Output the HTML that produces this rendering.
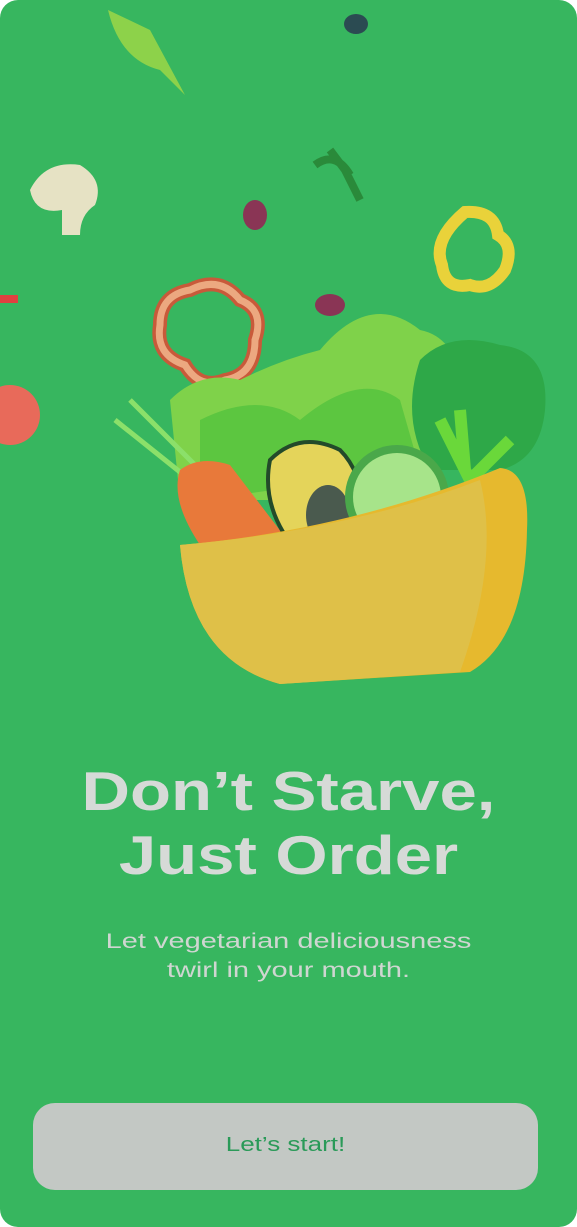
<!DOCTYPE html>
<html><head><meta charset="utf-8"><style>
html,body{margin:0;padding:0;background:#fff}
.ph{position:relative;width:577px;height:1227px;background:#37b65f;border-radius:18px;overflow:hidden;font-family:"Liberation Sans",sans-serif}
svg{position:absolute;left:0;top:0}
.t{position:absolute;left:0;width:577px;text-align:center;color:#d6dad7;font-weight:bold;font-size:55px;line-height:64px;top:759px;transform:scaleX(1.22);transform-origin:center}
.s{position:absolute;left:0;width:577px;text-align:center;color:#cfd6d1;font-size:21px;line-height:29px;top:927px;transform:scaleX(1.38);transform-origin:center}
.b{position:absolute;left:33px;top:1103px;width:505px;height:87px;background:#c3c8c4;border-radius:22px;}
.b span{position:absolute;left:0;width:505px;text-align:center;color:#2a9a58;font-size:20px;line-height:84px;transform:scaleX(1.3)}
</style></head><body><div class="ph">
<svg width="577" height="1227" viewBox="0 0 577 1227">
<path d="M108 10 L150 30 L185 95 L160 70 Q120 60 108 10Z" fill="#8dd24a"/>
<ellipse cx="356" cy="24" rx="12" ry="10" fill="#2b4b52"/>
<path d="M30 190 Q45 160 80 165 Q105 180 95 205 Q80 215 80 235 L62 235 L62 210 Q35 215 30 190Z" fill="#e6e2c4"/>
<path d="M330 150 L345 170 L360 200 M315 165 Q335 150 350 175" stroke="#2a8a3a" stroke-width="8" fill="none"/>
<ellipse cx="255" cy="215" rx="12" ry="15" fill="#8a3555"/>
<ellipse cx="330" cy="305" rx="15" ry="11" fill="#8a3555"/>
<path d="M465 212 Q495 210 498 235 Q515 245 505 270 Q490 292 470 285 Q445 290 442 265 Q432 240 465 212Z" fill="none" stroke="#e9d23a" stroke-width="12"/>
<path d="M190 290 Q220 275 240 300 Q265 310 255 340 Q255 375 225 380 Q200 390 185 365 Q155 355 160 325 Q160 295 190 290Z" fill="none" stroke="#c85a3a" stroke-width="14"/>
<path d="M190 290 Q220 275 240 300 Q265 310 255 340 Q255 375 225 380 Q200 390 185 365 Q155 355 160 325 Q160 295 190 290Z" fill="none" stroke="#eca880" stroke-width="7"/>
<circle cx="10" cy="415" r="30" fill="#e86a5a"/>
<rect x="0" y="295" width="18" height="8" fill="#e04040"/>
<path d="M170 400 Q200 370 240 380 Q280 360 320 350 Q370 290 420 330 Q470 340 460 430 L420 500 L180 500 Z" fill="#7fd24a"/>
<path d="M200 420 Q260 390 300 420 Q360 370 400 400 L420 470 L200 500Z" fill="#5cc640"/>
<path d="M420 360 Q450 330 500 345 Q550 350 545 410 Q540 460 500 470 L430 470 Q400 420 420 360Z" fill="#2ea848"/>
<path d="M440 420 L470 480 L510 440 M465 470 L460 410" stroke="#6ad83a" stroke-width="12" fill="none"/>
<path d="M115 420 L190 480 M130 400 L200 470" stroke="#8be06a" stroke-width="5"/>
<path d="M180 470 Q200 455 230 465 L295 550 L200 545 Q170 500 180 470Z" fill="#e8793a"/>
<path d="M270 460 Q300 430 340 450 Q370 480 360 540 L300 555 Q260 510 270 460Z" fill="#e4d45a" stroke="#234a2a" stroke-width="4"/>
<ellipse cx="328" cy="515" rx="22" ry="30" fill="#4a5a4e"/>
<circle cx="397" cy="497" r="52" fill="#4aa84a"/>
<circle cx="397" cy="497" r="44" fill="#a7e48a"/>
<path d="M180 545 Q350 530 500 468 Q530 470 527 530 Q525 640 470 672 L280 684 Q190 660 180 545Z" fill="#e6b92e"/>
<path d="M180 545 Q350 530 480 480 Q500 560 460 672 L280 684 Q190 660 180 545Z" fill="#dfc048"/>
</svg>
<div class="t">Don’t Starve,<br>Just Order</div>
<div class="s">Let vegetarian deliciousness<br>twirl in your mouth.</div>
<div class="b"><span>Let’s start!</span></div>
</div></body></html>
